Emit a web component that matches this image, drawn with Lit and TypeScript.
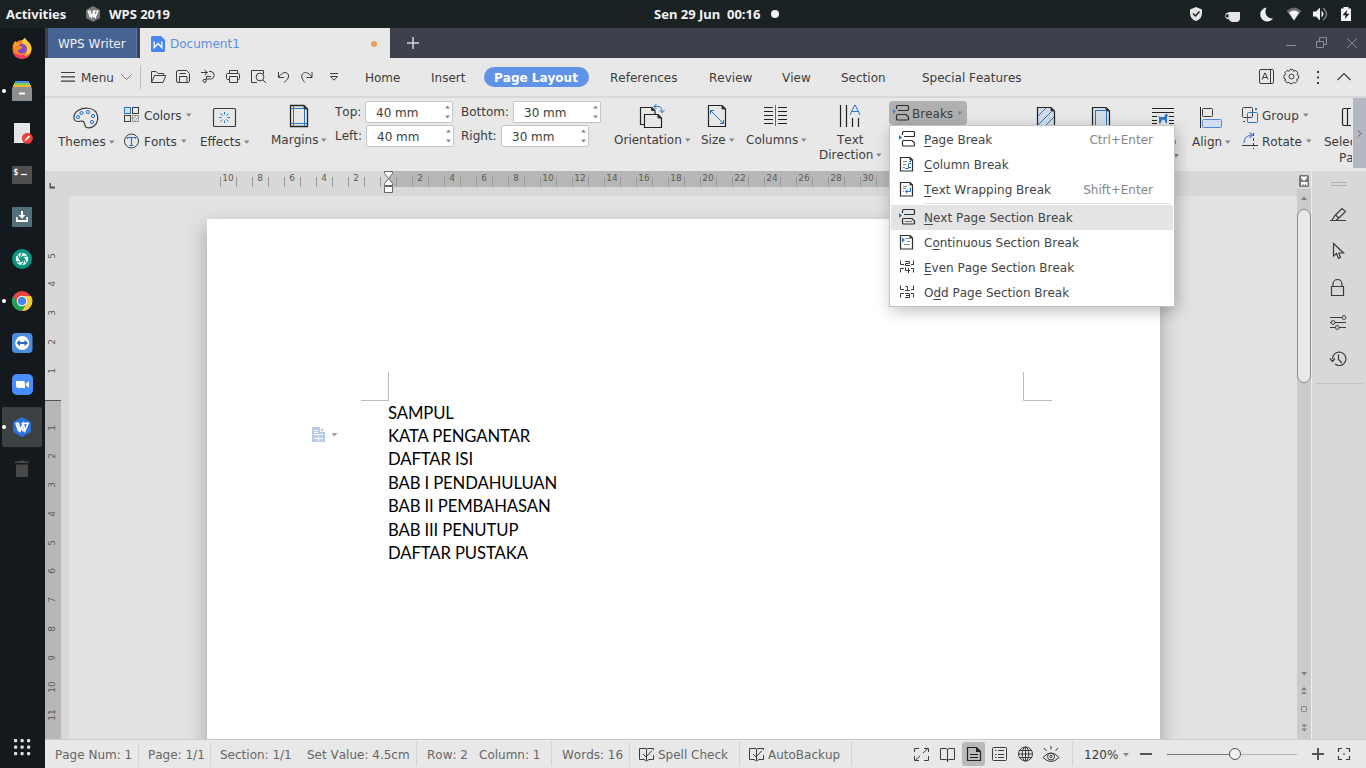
import { LitElement, html, svg, css } from "lit";
import { customElement } from "lit/decorators.js";

const ic = (x: number, y: number, w: number, h: number, body: unknown) =>
  html`<svg class="ic" width=${w} height=${h} viewBox="${x} ${y} ${w} ${h}">${body}</svg>`;

const arrow = html`<svg class="arrow" width="6" height="4" viewBox="0 0 6 4"><path d="M0 0.500H5.500L2.750 3.700Z" fill="#858585" /></svg>`;

const wHex = (cx: number, cy: number, r: number, fill: string) => svg`
  <path fill=${fill} d="M${cx} ${cy - r}L${cx + r * 0.88} ${cy - r * 0.5}V${cy + r * 0.5}L${cx} ${cy + r}L${cx - r * 0.88} ${cy + r * 0.5}V${cy - r * 0.5}Z"/>
  <path fill="none" stroke="#fff" stroke-width=${r * 0.17} d="M${cx - r * 0.66} ${cy - r * 0.36}H${cx - r * 0.36}L${cx - r * 0.18} ${cy + r * 0.36}L${cx + r * 0.12} ${cy - r * 0.32}L${cx + r * 0.3} ${cy + r * 0.36}L${cx + r * 0.62} ${cy - r * 0.36}H${cx - r * 0.05}M${cx - r * 0.6} ${cy - r * 0.36}L${cx - r * 0.34} ${cy + r * 0.36}H${cx - r * 0.18}M${cx + r * 0.3} ${cy + r * 0.36}H${cx + r * 0.1}L${cx - r * 0.02} ${cy}"/>`;

/* Dock launchers, each drawn in a 45 x 42 cell */
const dock = [
  svg`<circle cx="22" cy="49.500" r="9.500" fill="#ff7a2a"/><path d="M12.500 47C13 44 14 42 15.500 41L17 43.500L20 42.500L19 46L23 49Z" fill="#ff9a1f"/>
      <path d="M13 52A9.500 9.500 0 0 0 31 52A14 14 0 0 1 13 52Z" fill="#f2386b"/><circle cx="22" cy="48.800" r="4.800" fill="#7a4fd0"/>
      <path d="M22 43C22 40 23.500 38.500 25.500 38C26 41 31 42 31.500 48C31.500 53 28 56 24 56C28 53 28.500 47 25 44.500Z" fill="#ffcf3a"/><path d="M15 45.500L21 46L22.500 48L19 49.500C17 51 18 53 21 53.500C16 54.500 13 50 15 45.500Z" fill="#ff8a1c"/>`,
  svg`<path fill="#4a8fe8" d="M15 81H29V84H15Z"/><path fill="#7ccf4a" d="M14 83H30V86H14Z"/><path fill="#f5b73a" d="M13 85H31V88H13Z"/>
      <rect x="12" y="87" width="20" height="14" rx="1" fill="#8f8f8f"/><rect x="19" y="92.500" width="6" height="2" fill="#fff"/><circle cx="4" cy="91" r="2" fill="#fff"/>`,
  svg`<path fill="#e6e6e6" d="M14 123H30V143H14Z"/><circle cx="27.300" cy="138.300" r="5.500" fill="#f0413a"/><path stroke="#fff" stroke-width="1.800" d="M25 140.600L29.500 136.200"/>`,
  svg`<rect x="12" y="166" width="20" height="18" rx="1" fill="#505050"/><text x="13.500" y="174.500" font-size="8" class="mono" fill="#fff">$</text><path stroke="#fff" stroke-width="1.200" d="M21 174.500H27"/>`,
  svg`<rect x="12" y="207" width="20" height="20" rx="1" fill="#546e7a"/><path fill="#fff" d="M21 211H23V215H25.500L22 218.800L18.500 215H21ZM16 217H17.800V220H26.200V217H28V222H16Z"/>`,
  svg`<circle cx="22" cy="259" r="10" fill="#089683"/><circle cx="22" cy="259" r="6.200" fill="#fff"/><circle cx="22" cy="259" r="2.300" fill="#089683"/>
      <path stroke="#089683" stroke-width="1.200" d="M20 257.500L22.500 252.300M22 256.500L28 256M24 258L26.500 263.500M24 260.500L21.500 265.700M22 261.500L16 262M20 260L17.500 254.500"/>`,
  svg`<circle cx="22" cy="301" r="10" fill="#e8453c"/><path fill="#fbc930" d="M22 296H31A10 10 0 0 1 22 311L26.300 303.500Z"/><path fill="#1fa35a" d="M13.300 296A10 10 0 0 0 22 311L26.300 303.500L17.700 303.500Z"/>
      <circle cx="22" cy="301" r="5.200" fill="#fff"/><circle cx="22" cy="301" r="4.300" fill="#4486f4"/><circle cx="4" cy="301" r="2" fill="#fff"/>`,
  svg`<rect x="12" y="333" width="20.500" height="20" rx="4" fill="#4d8fdc"/><circle cx="22.200" cy="343" r="7" fill="#fff"/><path fill="#2a6ac0" d="M16.500 343L20 339.800V342H24.500V339.800L28 343L24.500 346.200V344H20V346.200Z"/>`,
  svg`<rect x="12" y="374" width="21" height="21" rx="5" fill="#4a8cff"/><path fill="#fff" d="M16 381H23.500A2 2 0 0 1 25 383V388H18A2 2 0 0 1 16 386ZM26 383.500L29 381.300V387.700L26 385.500Z"/>`,
  svg`<rect x="2" y="407" width="40" height="40" rx="2" fill="#3c4144"/><circle cx="4" cy="427" r="2" fill="#fff"/>${wHex(22, 427, 10, "#2d70e0")}`,
  svg`<path fill="#484848" d="M15 461.500H19L20 460.500H24L25 461.500H29V463H15ZM16 464.500H28V477H16Z"/>`,
];

/* Quick access icons, 25px pitch beginning at x = 146 */
const quick = [
  svg`<path d="M151.500 82.500V71.500H156L158 73.500H163.500V75.500M151.500 82.500L154.500 75.500H165.800L163 82.500Z"/>`,
  svg`<path d="M176.500 72A1.500 1.500 0 0 1 178 70.500H186.500L189.500 73.500V81.500A1.500 1.500 0 0 1 188 82.500H178A1.500 1.500 0 0 1 176.500 81ZM179.500 82.500V76.500H187V82.500M179.500 73.500H186"/>`,
  svg`<path d="M201 72.500H207M204.500 70L207.500 72.500L204.500 75M209 71.500H211A3.800 3.800 0 0 1 211 79H206V82A1.600 1.600 0 1 1 203.500 79.500H206M206.500 79V76.500H211"/>`,
  svg`<path d="M229.500 73V70.500H237.500V73M229 79.500H227.500A1 1 0 0 1 226.500 78.500V74.500A1 1 0 0 1 227.500 73.500H238.500A1 1 0 0 1 239.500 74.500V78.500A1 1 0 0 1 238.500 79.500H237.500M229.500 76.500H237.500V82.500H229.500Z"/>`,
  svg`<path d="M257 82.500H251.500V70.500H263.500V74M263 80L266 83"/><circle cx="260" cy="77" r="3.900"/>`,
  svg`<path d="M278.500 72V77.500H284M279 77C282 72 286 71.500 288 74C289.500 76.500 288 79.500 284 82.500"/>`,
  svg`<path d="M312 72V77.500H306.500M311.500 77C308.500 72 304.500 71.500 302.500 74C301 76.500 302 79.500 305 82.500"/>`,
  svg`<path d="M330 73.500H338M330.500 76.500H337.500L334 80.200Z"/>`,
];

const breakPair = (x: number, y: number, tail: unknown, clr = "#2a74c8") => svg`
  <path d="M${x} ${y - 4}L${x + 3} ${y - 1.500}L${x} ${y + 1}Z" fill=${clr} stroke="none"/>
  <path stroke="#2e2e2e" stroke-width="1.200" d="M${x + 3.500} ${y - 4}V${y - 6.500}A1 1 0 0 1 ${x + 4.500} ${y - 7.500}H${x + 14.500}A1 1 0 0 1 ${x + 15.500} ${y - 6.500}V${y - 3.500}A1 1 0 0 1 ${x + 14.500} ${y - 2.500}H${x + 5}M${x + 4.500} ${y + 1.500}H${x + 13}L${x + 15.500} ${y + 4}V${y + 6}A1 1 0 0 1 ${x + 14.500} ${y + 7}H${x + 4.500}A1 1 0 0 1 ${x + 3.500} ${y + 6}V${y + 2.500}A1 1 0 0 1 ${x + 4.500} ${y + 1.500}Z"/>${tail}`;
const sheet = (y: number, inner: unknown) => svg`<path stroke="#2e2e2e" stroke-width="1.200" d="M900.500 ${y - 7}H910L912.500 ${y - 4.500}V${y + 6.500}H900.500Z"/><path d="M910 ${y - 7}V${y - 4.500}H912.500Z" fill="#333"/>${inner}`;
const quads = (y: number) => svg`<path d="M900.500 ${y - 6.500}V${y - 2.500}H904M914 ${y - 2.500}H911M913.500 ${y - 6.500}V${y - 2.500}M900.500 ${y + 5.500}V${y + 1.500}H904M911 ${y + 1.500}H913.500V${y + 5.500}"/>`;

const menuItems = [
  { pre: "", key: "P", post: "age Break", hint: "Ctrl+Enter", art: ic(898, 127, 18, 25, breakPair(899, 139, "")) },
  { pre: "", key: "C", post: "olumn Break", hint: "", art: ic(898, 152, 18, 25, sheet(164.5, svg`<path stroke="#8a8a8a" d="M903 161.500H907M903 164.500H906M903 167.500H905"/><path stroke="#2a74c8" d="M905 168.500H908.500V163.500H911M909 161.500H911M909 167.500H911"/>`)) },
  { pre: "", key: "T", post: "ext Wrapping Break", hint: "Shift+Enter", art: ic(898, 177, 18, 25, sheet(189.5, svg`<path stroke="#8a8a8a" d="M903 186.500H907M903 188.500H906M903 191.500H904"/><path stroke="#2a74c8" d="M905.500 191.500H910.500V187.500M907.500 189.500L905.500 191.500L907.500 193.500"/>`)) },
  { sep: true, pre: "", key: "N", post: "ext Page Section Break", hint: "", active: true, art: ic(898, 205, 18, 25, breakPair(899, 217, svg`<path stroke="#777" d="M905 221.500H912"/>`)) },
  { pre: "C", key: "o", post: "ntinuous Section Break", hint: "", art: ic(898, 230, 18, 25, sheet(242.5, svg`<path stroke="#888" d="M905 238.500H910M907 241.500H910M904 244.500H910"/><path d="M902 237.500L905 240L902 242.500Z" fill="#2a74c8" stroke="none"/>`)) },
  { pre: "", key: "E", post: "ven Page Section Break", hint: "", art: ic(898, 255, 18, 25, svg`${quads(267)}<path d="M905 261.500H909.500V263.500H905.500V265.500H910M905.500 267.500V270.500H910M908.500 268V273"/>`) },
  { pre: "O", key: "d", post: "d Page Section Break", hint: "", art: ic(898, 280, 18, 25, svg`${quads(292)}<path d="M905.500 286.500H907.500V290.500M905 290.500H910M905 293.500H909.500V297.500H905M906 295.500H909"/>`) },
];

const spin = html`<svg class="spin" width="9" height="18" viewBox="0 0 9 18"><path fill="#8a8a8a" d="M2 5.500L4.500 2.500L7 5.500ZM2 12.500L4.500 15.500L7 12.500Z" /></svg>`;
const field = (label: string, value: string, cls: string) =>
  html`<div class="fieldrow ${cls}"><span class="flabel">${label}</span><span class="box">${value}${spin}</span></div>`;

const hTicks = Array.from({ length: 53 }, (_, i) => i - 10);

@customElement("app-root")
export class AppRoot extends LitElement {
  static styles = css`
    :host { display: grid; grid-template-rows: 28px 740px; width: 1366px; height: 768px; overflow: hidden; position: relative; font: 12px/16px "DejaVu Sans", sans-serif; font-kerning: none; color: #3c3c3c; background: #e8e8e8; }
    * { box-sizing: border-box; }
    span, .lab { white-space: nowrap; }
    svg { display: block; flex: none; }
    .ic { fill: none; stroke: #3c3c3c; overflow: hidden; }
    .blue { stroke: #2a74c8; }
    .mono { font-family: "DejaVu Sans Mono", monospace; font-weight: bold; }
    .top { display: grid; grid-template-columns: 6px 80px 23px 545px 116px 596px; align-items: center; background: #1b2224; color: #f2f2f2; font: bold 13px/28px "Noto Sans", sans-serif; font-kerning: normal; }
    .top .ic, .dock .ic { stroke: none; }
    .clock { white-space: pre; }
    .main { display: grid; grid-template-columns: 45px 1321px; }
    .dock { background: #13191c; display: flex; flex-direction: column; justify-content: space-between; }
    .app { display: grid; grid-template-rows: 30px 40px 73px 568px 29px; min-width: 0; }
    .titlebar { background: #3e404d; display: grid; grid-template-columns: 3px 89px 3px 250px 890px 86px; }
    .home { background: #466394; color: #eef2f8; padding-left: 10px; line-height: 32px; height: 30px; border-right: 1px solid #5876a6; }
    .doc { background: #e8e8e8; color: #5c8fe0; display: grid; grid-template-columns: 30px 193px 1fr; line-height: 32px; height: 30px; }
    .menubar { display: grid; grid-template-columns: 36px 65px 219px 66px 53px 126px 99px 73px 59px 81px 332px 112px; border-bottom: 2px solid #d8d8d8; line-height: 40px; height: 40px; }
    .menubar > * { align-self: start; }
    .quick { display: flex; }
    .pill { justify-self: start; background: #6093e8; color: #fff; font-weight: bold; border-radius: 10px; height: 20px; line-height: 22px; padding: 0 10px; margin-top: 9px; width: 105px; }
    .ribbon { display: grid; grid-template-columns: 13px 66px 76px 71px 64px 126px 153px 87px 45px 73px 70px 141px 162px 50px 82px 28px 14px; overflow: hidden; }
    .ribbon > * { min-width: 0; }
    .lab { display: flex; align-items: center; height: 17px; }
    .arrow { margin-left: 3px; }
    .row .arrow, .brk .arrow { margin-left: 4px; }
    .row { display: flex; align-items: center; height: 26px; line-height: 18px; }
    .row > span, .brk > span { padding-top: 1px; }
    .rows { padding-top: 4px; }
    .fields { padding-top: 3px; display: flex; flex-direction: column; gap: 2px; }
    .fieldrow { display: flex; height: 22px; line-height: 22px; }
    .flabel { flex: none; }
    .box { background: #fff; border: 1px solid #c6c6c6; border-radius: 2px; width: 88px; padding-left: 10px; display: flex; justify-content: space-between; line-height: 22px; }
    .spin { margin: 1px 0 0; }
    .top1 .flabel { width: 30px; } .left1 .flabel { width: 31px; }
    .bot .flabel { width: 52px; } .right1 .flabel { width: 40px; }
    .brk { margin-top: 3px; width: 78px; height: 24px; border-radius: 4px; background: #b0b0b0; display: flex; align-items: center; line-height: 24px; }
    .clip { overflow: hidden; }
    .dir { padding-left: 18px; height: 15px; } .dir2 { height: 15px; }
    .pa { padding-left: 15px; height: 15px; }
    .more { background: #b4b8c3; height: 71px; margin: -1px 0 0 1px; }
    .work { display: grid; grid-template-columns: 1252px 14px 55px; min-height: 0; height: 568px; }
    .canvas { display: grid; grid-template-rows: 25px 543px; min-width: 0; background: #e1e1e1; }
    .hruler { background: #d8d8d8; display: grid; grid-template-columns: 175px 1fr; overflow: hidden; }
    .cells { display: flex; height: 16px; width: 848px; background: linear-gradient(90deg, #d8d8d8 168px, #b7b7b7 168px 804px, #d8d8d8 804px); }
    .cell { flex: none; width: 16px; text-align: center; font-size: 9px; line-height: 15px; color: #5c5c5c; background: linear-gradient(#999, #999) 0 6px / 1px 10px no-repeat; display: flex; justify-content: center; }
    .cell.zero { height: 25px; }
    .paper { display: grid; grid-template-columns: 24px 1fr; min-height: 0; height: 543px; }
    .vruler { background: #d8d8d8; }
    .vr { width: 16px; font-size: 9px; color: #5c5c5c; }
    .vlight { padding-top: 45.500px; height: 205px; border-bottom: 1px solid #555; }
    .vdark { padding-top: 12.500px; background: #b7b7b7; height: 338px; overflow: hidden; }
    .vn { height: 28.800px; display: flex; align-items: center; justify-content: center; writing-mode: vertical-rl; transform: rotate(180deg); line-height: 16px; width: 14px; }
    .desk { overflow: hidden; padding: 23px 0 0 138px; height: 543px; }
    .page { width: 953px; height: 600px; background: #fff; box-shadow: 0 9px 17px 1px #a6a6a6; display: grid; grid-template-columns: 105px 76px 1fr; grid-template-rows: 182px 1fr; }
    .marks { grid-column: 1 / 4; }
    .tag { padding-top: 26px; grid-column: 2; }
    .text { padding-top: 0.600px; font: 16.700px/23.450px "Lato", sans-serif; font-kerning: normal; letter-spacing: -0.120px; color: #000; }
    .line { height: 23.450px; }
    .scroll { background: #cbcbcb; }
    .side { background: #d8d8d8; border-left: 1px solid #eee; }
    .status { border-top: 1px solid #cacaca; display: grid; color: #666; line-height: 30px; height: 29px; background: #e8e8e8; grid-template-columns: 10px 93px 72px 87px 120px 52px 83px 77px 19px 91px 19px 144px 172px 36px 246px; }
    .dark { color: #3c3c3c; }
    .pull { display: flex; justify-content: flex-end; }
    .cut { height: 24px; margin: 2px 9px 0 0; line-height: 26px; border-right: 1px solid #d4d4d4; }
    .cut.near { margin-right: 10px; }
    .cut.far { margin-right: 60px; }
    .menu { position: absolute; left: 889px; top: 125px; width: 286px; height: 182px; background: #fff; border: 1px solid #c4c4c4; padding: 1px 1px 0; box-shadow: 2px 4px 14px rgba(0, 0, 0, 0.25); }
    .item { height: 25px; display: grid; grid-template-columns: 7px 26px 1fr auto 20px; line-height: 26px; color: #444; }
    .item.on { background: #e4e4e4; }
    .sep { height: 3px; margin: 0 2px 0 33px; background: linear-gradient(#e4e4e4, #e4e4e4) 0 1px / 100% 1px no-repeat; }
    .hint { color: #868686; }
    u { text-underline-offset: 2px; text-decoration-thickness: 1px; }
  `;

  private tabs = ["References", "Review", "View", "Section", "Special Features"];
  private lines = [
    "SAMPUL", "KATA PENGANTAR", "DAFTAR ISI", "BAB I PENDAHULUAN",
    "BAB II PEMBAHASAN", "BAB III PENUTUP", "DAFTAR PUSTAKA",
  ];

  render() {
    return html`
      ${this.topBar()}
      <div class="main">
        <div class="dock">
          <div>${dock.map((d, i) => ic(0, 28 + 42 * i, 45, 42, d))}</div>
          ${ic(0, 728, 45, 40, svg`${[740.5, 747, 753.5].map((y) => [15.5, 22, 28.5].map((x) => svg`<rect x=${x - 1.5} y=${y - 1.5} width="3.2" height="3.2" rx="1" fill="#e0e0e0"/>`))}`)}
        </div>
        <div class="app">
          ${this.titleBar()} ${this.menuBar()} ${this.ribbon()} ${this.work()} ${this.status()}
        </div>
      </div>
      ${this.menu()}
    `;
  }

  private topBar() {
    return html`<div class="top">
      <span></span><span>Activities</span>
      ${ic(86, 0, 23, 28, wHex(93, 14, 8, "#777"))}
      <span>WPS 2019</span><span class="clock">Sen 29 Jun  00:16</span>
      ${ic(770, 0, 596, 28, svg`<circle cx="775" cy="14" r="4" fill="#f2f2f2"/>
        <path fill="#e4e4e4" d="M1196 7L1202 9.500V13C1202 17 1199.500 20 1196 21C1192.500 20 1190 17 1190 13V9.500Z"/><path fill="none" stroke="#1b2224" stroke-width="1.500" d="M1193 13.500L1195.500 16L1199.500 11.500"/>
        <path fill="#e4e4e4" d="M1229 12H1240V18A4 4 0 0 1 1236 22H1233A4.500 4.500 0 0 1 1228.700 19H1227A3.500 3.500 0 0 1 1227 12.800H1228Z"/><path fill="#1b2224" d="M1228.500 14.300H1227.300A1.500 1.500 0 0 0 1227.300 17.500H1228.500Z"/>
        <path fill="#f2f2f2" d="M1266.500 7.500A7 7 0 1 0 1273 18.500C1267 19 1263.500 13 1266.500 7.500Z"/>
        <path fill="#6a6f70" d="M1286.500 11Q1294 4 1301.500 11L1294 20.500Z"/><path fill="#f2f2f2" d="M1289 12.500Q1294 8.500 1299 12.500L1294 20.500Z"/>
        <path fill="#f2f2f2" d="M1313 11.500H1316L1320 7.500V20.500L1316 16.500H1313ZM1321.500 10.500Q1325.500 14 1321.500 17.500Z"/><path fill="none" stroke="#777c7d" stroke-width="1.500" d="M1323 8Q1330 14 1323 20"/>
        <path fill="#f2f2f2" d="M1343.500 7H1348.500V8.500H1351V21H1341V8.500H1343.500Z"/><path fill="#1b2224" d="M1347 10L1342.500 15.300H1345.500L1345 19L1349.500 13.700H1346.500Z"/>`)}
    </div>`;
  }

  private titleBar() {
    return html`<div class="titlebar">
      <span></span><span class="home">WPS Writer</span><span></span>
      <div class="doc">
        ${ic(140, 28, 30, 30, svg`<path stroke="none" fill="#4a86f0" d="M152.500 36H161L165 40V50.500A1.500 1.500 0 0 1 163.500 52H152.500A1.500 1.500 0 0 1 151 50.500V37.500A1.500 1.500 0 0 1 152.500 36Z"/><path stroke="#fff" stroke-width="1.300" d="M154.200 41.500V47.500L158 43.500L161.800 47.500V41.500"/>`)}
        <span>Document1</span>
        ${ic(363, 28, 27, 30, svg`<circle cx="374" cy="44" r="3" fill="#e8a05a" stroke="none"/>`)}
      </div>
      ${ic(390, 28, 60, 30, svg`<path stroke="#d4d6dc" stroke-width="1.500" d="M407 43H419M413 37V49"/>`)}
      ${ic(1280, 28, 86, 30, svg`<path stroke="#8b8e99" d="M1286 45.500H1296M1316.500 41.500H1323.500V47.500H1316.500ZM1319.500 41V37.500H1326.500V44.500H1324M1347 38.500L1357 48M1357 38.500L1347 48"/>`)}
    </div>`;
  }

  private menuBar() {
    return html`<div class="menubar">
      ${ic(45, 58, 36, 38, svg`<path stroke-width="1.200" d="M61 72.500H75M61 76.800H75M61 81.200H75"/>`)}
      <div class="quick"><span>Menu</span>${ic(114, 58, 32, 38, svg`<path stroke="#777" d="M121.500 74.500L126.500 79.500L131.500 74.500"/><path stroke="#bdbdbd" d="M140.500 65V89"/>`)}</div>
      <div class="quick">${quick.map((q, i) => ic(146 + 25 * i, 58, 25, 38, q))}</div>
      <span>Home</span><span>Insert</span><span class="pill">Page Layout</span>
      ${this.tabs.map((t) => html`<span>${t}</span>`)}
      ${ic(1254, 58, 112, 38, svg`<rect x="1259.500" y="69.500" width="14" height="14" rx="1.500"/><path d="M1270.500 69.500V83.500M1262 79.500L1264.800 73H1265.200L1268 79.500M1263 77.500H1267"/>
        <circle cx="1291.500" cy="76.500" r="2.500"/><path d="M1290 69.500h3l.8 1.800 2-.8 2 2.200-.8 1.800 1.600 1v2.800l-1.800.8.600 2-2.200 2-1.800-.9-1 1.500h-2.400l-1-1.600-1.900.9-2.200-2 .7-2-1.700-.8v-2.700l1.800-.9-.8-2 2-2.100 2 .8Z"/>
        <path stroke-width="2" stroke-dasharray="2 3.500" d="M1318 71V84"/><path stroke-width="1.200" d="M1337.500 80L1344 73.500L1350.500 80"/>`)}
    </div>`;
  }

  private ribbon() {
    const lab = (t: string) => html`<div class="lab">${t}${arrow}</div>`;
    return html`<div class="ribbon">
      <span></span>
      <div>${ic(58, 98, 60, 35, svg`<path stroke-width="1.200" d="M84 122C82 120 80 121.500 78 121.500C72 121 73 114 78 110.500C84 107 92 107.500 96 112C99 117 98 123 94 126C90 129 84.500 128 85 125Z"/><g class="blue" fill="#cfe0f4"><circle cx="78" cy="117" r="1.600"/><circle cx="81.500" cy="113" r="1.600"/><circle cx="88" cy="112" r="1.600"/><circle cx="93" cy="116" r="1.600"/><circle cx="92" cy="122" r="1.600"/></g>`)}${lab("Themes")}</div>
      <div class="rows">
        <div class="row">${ic(124, 102, 20, 26, svg`<rect class="blue" x="124.500" y="107.500" width="6" height="6" fill="#cfe0f4"/><rect x="132.500" y="107.500" width="6" height="6"/><rect x="124.500" y="115.500" width="6" height="6"/><rect x="132.500" y="115.500" width="6" height="6" stroke="#999"/><path stroke="#999" d="M133 119L136 116M134 121.500L138.500 117"/>`)}<span>Colors</span>${arrow}</div>
        <div class="row">${ic(124, 128, 20, 26, svg`<circle cx="131.500" cy="141" r="7"/><path class="blue" stroke-width="1.200" d="M127.500 139V137.500H135.500V139M131.500 137.500V145.500M129.500 145.500H133.500"/>`)}<span>Fonts</span>${arrow}</div>
      </div>
      <div>${ic(200, 98, 60, 35, svg`<rect x="213.500" y="108.500" width="22" height="18" rx="1" stroke-width="1.200"/><path class="blue" d="M224.500 112V114.500M224.500 120.500V123M219 117.500H221.500M227.500 117.500H230M220.500 113.500L222.500 115.500M228.500 113.500L226.500 115.500M220.500 121.500L222.500 119.500M228.500 121.500L226.500 119.500"/>`)}${lab("Effects")}</div>
      <div>${ic(271, 98, 60, 33, svg`<path stroke-width="1.300" stroke="#222" d="M290.500 105.500H304L307.500 109V126.500H290.500Z"/><path fill="#222" d="M304 105.500V109H307.500Z"/><path class="blue" d="M293.500 106V126M304.500 109V126M291 108.500H304M291 123.500H307"/>`)}${lab("Margins")}</div>
      <div class="fields">${field("Top:", "40 mm", "top1")}${field("Left:", "40 mm", "left1")}</div>
      <div class="fields">${field("Bottom:", "30 mm", "bot")}${field("Right:", "30 mm", "right1")}</div>
      <div>${ic(614, 98, 80, 33, svg`<path stroke="#222" stroke-width="1.200" d="M644 124.500H640.500V107.500H652L655 110.500V114M644.500 114.500H658L661.500 118V127.500H644.500Z"/><path fill="#222" d="M651.500 107.500V110.500H655ZM658 114.500V118H661.500Z"/><path class="blue" d="M654 106.500H659Q662 107 662 112M656.500 104L654 106.500L656.500 109M659.500 110L662 112.800L664.500 110"/>`)}${lab("Orientation")}</div>
      <div>${ic(701, 98, 44, 33, svg`<path stroke="#222" stroke-width="1.200" d="M708.500 105.500H722L725.500 109V126.500H708.500Z"/><path fill="#222" d="M722 105.500V109H725.500Z"/><path class="blue" d="M710.500 110.500L723.500 123.500M710.500 114V110.500H714M720 123.500H723.500V120"/>`)}${lab("Size")}</div>
      <div>${ic(746, 98, 60, 33, svg`<path stroke="#222" d="M764 107.500H773M764 111.500H773M764 115.500H773M764 119.500H773M764 123.500H773M778 107.500H787M778 111.500H787M778 115.500H787M778 119.500H787M778 123.500H787"/><path class="blue" d="M775.500 105V126"/>`)}${lab("Columns")}</div>
      <div>${ic(819, 98, 60, 34, svg`<path stroke="#222" stroke-width="1.200" d="M840.500 105V127M846.500 105V127M852.500 118V127M858.500 118V127"/><path class="blue" d="M850 115L854.800 105H855.200L860 115M851.500 111.500H858.500"/>`)}<div class="lab dir">Text</div><div class="lab dir2">Direction${arrow}</div></div>
      <div><div class="brk">${ic(889, 101, 23, 24, breakPair(893, 113, "", "#3f7de0"))}<span>Breaks</span>${arrow}</div></div>
      <div>${ic(1030, 98, 162, 72, svg`<path stroke="#222" stroke-width="1.200" fill="#d3dde8" d="M1037.500 107.500H1051L1054.500 111V130H1037.500ZM1092.500 107.500H1106L1109.500 111V130H1092.500Z"/><path fill="#222" d="M1051 107.500V111H1054.500ZM1106 107.500V111H1109.500Z"/><path class="blue" d="M1038 116L1046 108M1038 125L1051 112M1044 127L1054 117M1095.500 128V110.500H1106.500V128"/>
        <path stroke="#222" d="M1152 108.500H1174M1152 112.500H1174M1152 116.500H1157M1169 116.500H1174M1152 120.500H1157M1169 120.500H1174M1152 123.500H1157M1169 123.500H1174"/><path fill="#2a74c8" stroke="none" d="M1158 116L1160 117H1164L1166 113.500L1168 115L1167 117V123H1165.500L1164.500 119.500L1161.500 120.500L1160.500 123.500H1159V117.500Z"/>
        <path stroke="none" fill="#3c3c3c" d="M1172 140H1175.500V144H1172Z"/><path stroke="none" fill="#858585" d="M1173 154H1179L1176 157.500Z"/>`)}</div>
      <div>${ic(1192, 98, 50, 35, svg`<path stroke="#222" d="M1200.500 107V128"/><rect x="1202.500" y="108.500" width="10" height="8" rx="1"/><rect x="1202.500" y="119.500" width="19" height="8" rx="1" fill="#d3dff0" stroke="#5a86d8"/>`)}${lab("Align")}</div>
      <div class="rows">
        <div class="row">${ic(1242, 102, 20, 26, svg`<rect x="1242.500" y="107.500" width="10" height="10" rx="1"/><rect class="blue" x="1247.500" y="112.500" width="10" height="10" rx="1"/><path d="M1243 121.500H1245"/><path class="blue" stroke-width="2" d="M1255 109H1257"/>`)}<span>Group</span>${arrow}</div>
        <div class="row">${ic(1242, 128, 20, 26, svg`<path stroke="#5a86d8" stroke-width="1.200" d="M1244 143Q1244 135.500 1252 135M1249.500 132.500L1252.500 135L1249.500 138"/><path d="M1242 145.500H1258"/><path stroke-dasharray="3 2" d="M1253.500 133V149"/>`)}<span>Rotate</span>${arrow}</div>
      </div>
      <div class="clip">${ic(1324, 98, 27, 35, svg`<path stroke="#222" stroke-width="1.200" d="M1353 108.500H1344A1.500 1.500 0 0 0 1342.500 110V124A1.500 1.500 0 0 0 1344 125.500H1353M1347.500 109V125"/>`)}<div class="lab">Selec</div><div class="lab pa">Pa</div></div>
      <div class="more">${ic(1353, 97, 13, 71, svg`<path stroke="#555" d="M1358 130.500L1361 133.500L1358 136.500"/>`)}</div>
    </div>`;
  }

  private work() {
    return html`<div class="work">
      <div class="canvas">
        <div class="hruler">
          ${ic(45, 171, 40, 25, svg`<path fill="#555" stroke="none" d="M49.500 183H51V186.500H55V188.500H49.500Z"/>`)}
          <div class="cells">
            ${hTicks.map((n) => n === 0
              ? html`<div class="cell zero">${ic(380, 171, 16, 25, svg`<path fill="#fff" stroke="#666" d="M384.500 171.500H392.500V173.500L388.500 178.500L384.500 173.500ZM388.500 178.500L392.500 183.500V185.500H384.500V183.500ZM384.500 186.500H392.500V192.500H384.500Z"/>`)}</div>`
              : html`<div class="cell">${n % 2 === 0 && n < 40 ? Math.abs(n) : ""}</div>`)}
          </div>
        </div>
        <div class="paper">
          <div class="vruler">
            <div class="vr vlight">${[5, 4, 3, 2, 1].map((n) => html`<div class="vn">${n}</div>`)}</div>
            <div class="vr vdark">${[1, 2, 3, 4, 5, 6, 7, 8, 9, 10, 11].map((n) => html`<div class="vn">${n}</div>`)}</div>
          </div>
          <div class="desk">
            <div class="page">
              <div class="marks">${ic(207, 219, 953, 182, svg`<path stroke="#bdbdbd" d="M361 400.500H388.500V372M1052 400.500H1023.500V372"/>`)}</div>
              <div class="tag">${ic(312, 427, 35, 16, svg`<path fill="#b9cbe8" stroke="none" d="M312 427H320.500L325 431.500V442H312Z"/><path stroke="#fff" d="M314 430.500H318M314 432.500H318M314 434.500H323M314.500 438.500H323M320.500 427V431.500H325M318.500 436.500V441"/><path fill="#a0a0a0" stroke="none" d="M331.500 433H337.500L334.500 436.500Z"/>`)}</div>
              <div class="text">${this.lines.map((l) => html`<div class="line">${l}</div>`)}</div>
            </div>
          </div>
        </div>
      </div>
      <div class="scroll">${ic(1297, 171, 14, 568, svg`<path fill="#d8d8d8" stroke="none" d="M1297 171H1311V189H1297Z"/><rect x="1299" y="175" width="10" height="12" rx="1.500" fill="#777" stroke="none"/><path fill="#fff" stroke="none" d="M1301 176.500H1307V178L1304 181L1301 178ZM1301 182H1307.500V185.500H1306V184H1305V185.500H1303.500V184H1302.500V185.500H1301Z"/>
        <path fill="#808080" stroke="none" d="M1301 200H1307L1304 196.500ZM1301.500 672H1307L1304.200 675.500ZM1301 690H1307L1304 687ZM1301 694H1307L1304 691ZM1301.500 724.500H1307L1304.200 727.500ZM1301.500 728.500H1307L1304.200 731.500Z"/>
        <rect x="1297.500" y="209.500" width="13" height="173" rx="6.500" fill="#e8e8e8" stroke="#8a8a8a"/><rect x="1301.500" y="706.500" width="5" height="5" rx="1" stroke="#808080"/>`)}</div>
      <div class="side">${ic(1312, 171, 54, 230, svg`<path stroke="#b0b0b0" d="M1331 182.500H1347M1331 185.500H1347"/><path stroke="#c4c4c4" d="M1315 383.500H1363"/>
        <path stroke-width="1.200" d="M1330 220.500H1346M1332 220L1335.500 215L1342 208.500L1345.500 211.500L1339 218L1336 220M1335.500 215L1339 218"/>
        <path stroke-width="1.200" d="M1333.500 243.500V256L1336.500 253.500L1338.500 258.500L1340.500 257.500L1338.800 253H1343.500Z"/>
        <path stroke-width="1.200" d="M1331.500 286.500H1343.500V295.500H1331.500ZM1333 286V284A4.500 4.500 0 0 1 1342 284V286"/>
        <path stroke-width="1.200" d="M1330 317.500H1342M1330 322.500H1331.500M1335 322.500H1346M1330 327.500H1335.500M1339 327.500H1346"/><circle cx="1344" cy="317.500" r="1.900"/><circle cx="1333.200" cy="322.500" r="1.900"/><circle cx="1337.300" cy="327.500" r="1.900"/>
        <path stroke-width="1.200" d="M1332.500 359A6.700 6.700 0 1 1 1335 364M1330 358.500L1332.500 361.500L1335 358.500M1338.500 354.500V359.500L1342 363"/>`)}</div>
    </div>`;
  }

  private status() {
    const rule = (x: number) => svg`<path stroke="#d4d4d4" d="M${x}.5 742V766"/>`;
    const check = (x: number) => ic(x - 12, 740, 31, 28, svg`${rule(x - 10)}<path d="M${x + 7} 748.500H${x + 0.5}V759.500H${x + 5}L${x + 7.500} 761L${x + 10} 759.500H${x + 14.500}V755M${x + 7.500} 760V749L${x + 9} 748.500H${x + 14.500}V750M${x + 4} 754L${x + 7} 757L${x + 13} 750.500"/>`);
    return html`<div class="status">
      <span></span><span class="cut">Page Num: 1</span><span class="cut">Page: 1/1</span><span>Section: 1/1</span><span class="cut near">Set Value: 4.5cm</span>
      <span>Row: 2</span><span class="cut near">Column: 1</span><span>Words: 16</span>
      <div class="pull">${check(639)}</div><span>Spell Check</span><div class="pull">${check(749)}</div><span class="cut far">AutoBackup</span>
      ${ic(912, 740, 172, 28, svg`
        <path d="M914.500 752V748.500H919M924 748.500H928.500V752M914.500 756V760.500H919M924 760.500H928.500V756M923 753L928 748.500M920 756L915 760.500"/>
        <path d="M940.500 748.500H946L947.500 749.500L949 748.500H954.500V759.500H949L947.500 760.500L946 759.500H940.500ZM947.500 749V762"/>
        <rect x="962" y="742" width="23" height="24" rx="3" fill="#b9b9b9" stroke="none"/><path stroke="#222" stroke-width="1.200" d="M967.500 747.500H976.500L980.500 751.500V760.500H967.500ZM970 754.500H978M970 757.500H978"/><path stroke="none" fill="#222" d="M976 747V752H981Z"/>
        <rect x="992.500" y="747.500" width="14" height="13" rx="1"/><path d="M995 750.500H996.500M995 754.500H996.500M995 757.500H996.500M998 750.500H1004M998 754.500H1004M998 757.500H1004"/>
        <circle cx="1025.500" cy="754" r="7"/><ellipse cx="1025.500" cy="754" rx="3.300" ry="7"/><path d="M1018.500 754H1032.500M1019.500 750.500H1031.500M1019.500 757.500H1031.500M1025.500 747V761"/>
        <path d="M1043 757.500Q1051 748.500 1059 757.500Q1051 765.500 1043 757.500ZM1051 746V749.500M1044 748L1046.500 751M1058 748L1055.500 751"/><circle cx="1051" cy="756.500" r="3.500"/><circle cx="1051" cy="756.500" r="1.200"/>${rule(1072)}`)}
      <span class="dark">120%</span>
      ${ic(1120, 740, 246, 28, svg`<path stroke="none" fill="#858585" d="M1123 753H1129L1126 756.500Z"/><path stroke="#555" stroke-width="2" d="M1140 754H1152M1312 754H1324M1318 748V760"/><path stroke="#777" d="M1167 754.500H1235"/><path stroke="#b4b4b4" d="M1235 754.500H1297"/><circle cx="1235" cy="754" r="5.500" fill="#f0f0f0" stroke="#555"/><path stroke-width="1.200" d="M1338.500 752V748.500H1342M1346 748.500H1349.500V752M1338.500 756V759.500H1342M1346 759.500H1349.500V756M1343 754H1345"/>`)}
    </div>`;
  }

  private menu() {
    return html`<div class="menu">
      ${menuItems.map((m) => html`${m.sep ? html`<div class="sep"></div>` : ""}
        <div class="item ${m.active ? "on" : ""}"><span></span>${m.art}<span>${m.pre}<u>${m.key}</u>${m.post}</span><span class="hint">${m.hint}</span></div>`)}
    </div>`;
  }
}
